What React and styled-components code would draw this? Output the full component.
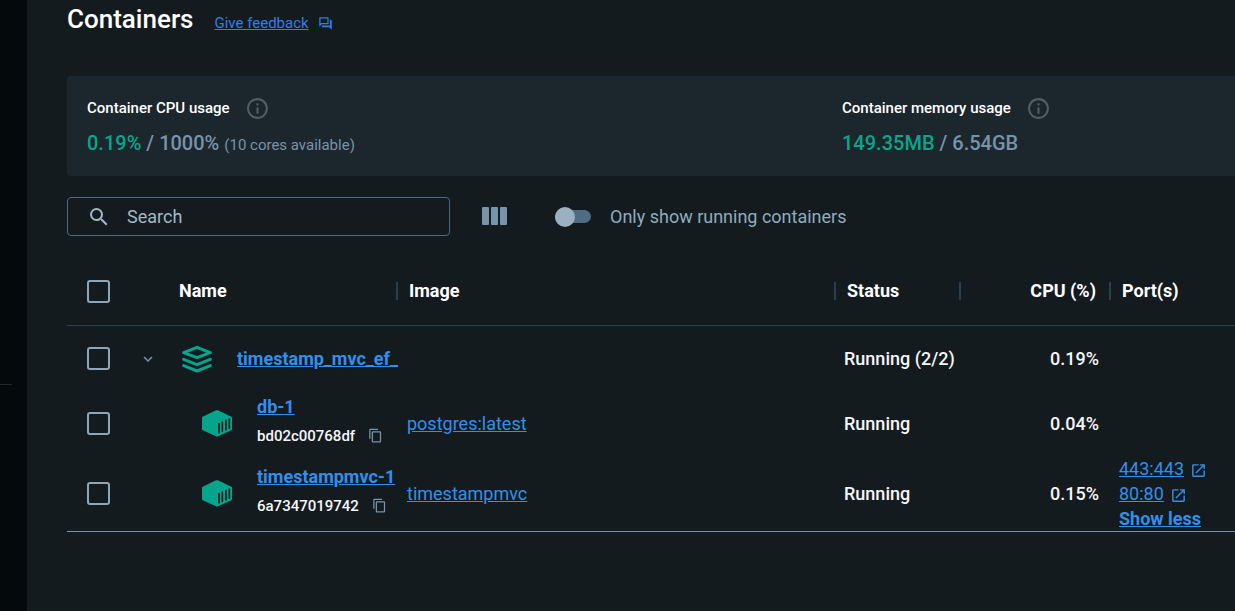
import React from 'react';
import styled, { createGlobalStyle, css } from 'styled-components';
import {
  MdOutlineQuestionAnswer,
  MdInfoOutline,
  MdSearch,
  MdContentCopy,
  MdOpenInNew,
  MdKeyboardArrowDown,
} from 'react-icons/md';

const GlobalStyle = createGlobalStyle`
  *, *::before, *::after { box-sizing: border-box; }
  body {
    margin: 0;
    background: #141b1f;
    color: #f4f6f8;
    font-family: Roboto, "Liberation Sans", sans-serif;
    font-size: 18px;
    line-height: 24px;
  }
  button, input { font: inherit; color: inherit; }
  svg { flex-shrink: 0; }
`;

const Page = styled.div`
  display: grid;
  grid-template-columns: 27px minmax(0, 1fr);
  min-height: 100vh;
`;

const Rail = styled.aside`
  background: #04090c;
  padding-top: 384px;
`;

const RailDivider = styled.hr`
  width: 12px;
  height: 1px;
  margin: 0;
  border: 0;
  background: #23292d;
`;

const Main = styled.main`
  padding-left: 40px;
`;

const Header = styled.header`
  display: flex;
  align-items: center;
  gap: 21px;
  height: 38px;
`;

const Title = styled.h1`
  margin: 0;
  font-size: 26px;
  line-height: 38px;
  font-weight: 500;
  color: #fff;
`;

const Feedback = styled.a`
  display: flex;
  align-items: center;
  gap: 9px;
  padding-top: 8px;
  font-size: 15px;
  color: #2e7feb;
`;

const UsageCard = styled.section`
  display: flex;
  height: 100px;
  margin-top: 38px;
  padding: 20px;
  border-radius: 4px 0 0 4px;
  background: #1c262d;
`;

const Usage = styled.div`
  ${(p) => (p.$last ? css`width: 373px;` : css`flex: 1;`)}
`;

const UsageTitle = styled.h2`
  display: flex;
  align-items: center;
  gap: 15px;
  margin: 0;
  font-size: 15px;
  line-height: 25px;
  font-weight: 500;
  color: #fff;

  svg { color: #545d66; }
`;

const UsageValue = styled.p`
  margin: 10px 0 0;
  font-size: 20px;
  font-weight: 500;
  color: #7794ab;

  strong { font-weight: 500; color: #08a68c; }
  small { font-size: 15px; font-weight: 400; color: #7794ab; }
`;

const Toolbar = styled.div`
  display: flex;
  align-items: flex-start;
  height: 39px;
  margin-top: 21px;
`;

const SearchBox = styled.label`
  display: flex;
  align-items: center;
  gap: 16px;
  width: 383px;
  height: 39px;
  padding: 0 19px;
  border: 1px solid #4d697d;
  border-radius: 4px;
  color: #a3b7c6;
`;

const SearchInput = styled.input`
  flex: 1;
  min-width: 0;
  padding: 0;
  border: 0;
  outline: 0;
  background: none;

  &::placeholder { color: #a3b7c6; opacity: 1; }
`;

const IconButton = styled.button`
  display: inline-flex;
  align-items: center;
  justify-content: center;
  padding: 0;
  border: 0;
  background: none;
  color: #7794ab;
  cursor: pointer;
`;

const ColumnsButton = styled(IconButton)`
  width: 45px;
  height: 38px;
  margin-left: 22px;
`;

const ToggleLabel = styled.label`
  display: flex;
  align-items: center;
  gap: 19px;
  height: 39px;
  margin-left: 38px;
  color: #8fabbf;
`;

const Toggle = styled.input`
  appearance: none;
  display: flex;
  align-items: center;
  width: 36px;
  height: 13px;
  margin: 0;
  background: #4e6c82;
  border-radius: 7px;

  &::before {
    content: '';
    flex-shrink: 0;
    width: 20px;
    height: 20px;
    border-radius: 50%;
    background: #9bb0c0;
  }
  &:checked { justify-content: flex-end; }
`;

const Table = styled.table`
  width: 100%;
  margin-top: 21px;
  border-collapse: separate;
  border-spacing: 0;
  border-bottom: 1px solid #7794ab;
  table-layout: fixed;
`;

const Col = styled.col`
  width: ${(p) => p.$width};
`;

const HeadCell = styled.th`
  height: 69px;
  padding: 0 13px 0 0;
  border-bottom: 1px solid #2f414e;
  font-weight: 700;
  text-align: left;
  color: #fff;
`;

const HeadContent = styled.div`
  display: flex;
  align-items: center;
  justify-content: ${(p) => (p.$end ? 'space-between' : 'flex-start')};
  gap: 11px;
  white-space: nowrap;

  &::before {
    content: '';
    width: 2px;
    height: 18px;
    background: #2b3e4b;
  }
`;

const NameHead = styled(HeadCell)`
  padding-left: 50px;
`;

const CheckHead = styled(HeadCell)`
  padding: 0 0 0 20px;
`;

const Row = styled.tr`
  height: ${(p) => p.$height};
`;

const Cell = styled.td`
  padding: 0 10px;
  text-align: ${(p) => (p.$end ? 'right' : 'left')};
  font-weight: ${(p) => (p.$strong ? 500 : 400)};
  white-space: nowrap;
`;

const CheckCell = styled(Cell)`
  padding: 0 0 0 20px;
`;

const NameCell = styled(Cell)`
  padding: 0;
`;

const ImageCell = styled(Cell)`
  padding-left: 11px;
`;

const Checkbox = styled.input`
  appearance: none;
  display: block;
  width: 23px;
  height: 23px;
  margin: 0;
  border: 2px solid #8fa6b7;
  border-radius: 3px;

  &:checked { background: #8fa6b7; }
`;

const GroupName = styled.div`
  display: flex;
  align-items: center;
`;

const Expander = styled(IconButton)`
  flex-shrink: 0;
  width: 38px;
  height: 24px;
  margin-right: 14px;
`;

const ContainerName = styled.div`
  display: flex;
  align-items: center;
  gap: 25px;
  padding-left: 73px;
`;

const NameStack = styled.div`
  padding-bottom: 5px;
`;

const IdLine = styled.div`
  display: flex;
  align-items: center;
  gap: 13px;
  margin-top: 5px;
  font-size: 15px;
  font-weight: 500;
`;

const Link = styled.a`
  color: #338fec;
  font-weight: ${(p) => (p.$strong ? 700 : 400)};
`;

const GroupLink = styled(Link)`
  margin-left: 24px;
`;

const Ports = styled.div`
  display: flex;
  flex-direction: column;
  align-items: flex-start;
  line-height: 25px;
`;

const PortLink = styled(Link)`
  display: flex;
  align-items: center;
  gap: 6px;

  svg { margin-top: 4px; }
`;

const TextButton = styled.button`
  padding: 0;
  border: 0;
  background: none;
  color: #338fec;
  font-weight: 700;
  line-height: 25px;
  text-decoration: underline;
  cursor: pointer;
`;

const ColumnsIcon = () => (
  <svg width="25" height="18" viewBox="0 0 25 18" fill="currentColor" aria-hidden="true">
    <rect x="0" y="0" width="7" height="18" rx="1" />
    <rect x="9" y="0" width="7" height="18" rx="1" />
    <rect x="18" y="0" width="7" height="18" rx="1" />
  </svg>
);

const StackIcon = () => (
  <svg width="32" height="28" viewBox="0 0 96 84" fill="none" stroke="#04a58b" strokeWidth="9" strokeLinecap="round" strokeLinejoin="round" aria-hidden="true">
    <path d="M48 7 L88 23 L48 38 L8 23 Z" />
    <path d="M8 43 L48 59 L88 43" />
    <path d="M8 62 L48 78 L88 62" />
  </svg>
);

const CubeIcon = () => (
  <svg width="30" height="27" viewBox="0 0 90 81" aria-hidden="true">
    <path fill="#04a58b" d="M42 1 Q45 0 48 1 L88 20 Q90 21 90 23 V58 Q90 60 88 61 L48 79 Q45 81 42 79 L2 61 Q0 60 0 58 V23 Q0 21 2 20 Z" />
    <path stroke="#141b1f" strokeWidth="5" strokeLinecap="round" d="M51 41 V68 M61 36 V64 M72 31 V59 M82 27 V55" />
  </svg>
);

const containers = [
  { name: 'db-1', id: 'bd02c00768df', image: 'postgres:latest', cpu: '0.04%', ports: [], height: '65px' },
  { name: 'timestampmvc-1', id: '6a7347019742', image: 'timestampmvc', cpu: '0.15%', ports: ['443:443', '80:80'], height: '75px' },
];

export default function App() {
  return (
    <>
      <GlobalStyle />
      <Page>
        <Rail>
          <RailDivider />
        </Rail>
        <Main>
          <Header>
            <Title>Containers</Title>
            <Feedback href="#feedback">
              Give feedback
              <MdOutlineQuestionAnswer size={15} />
            </Feedback>
          </Header>

          <UsageCard>
            <Usage>
              <UsageTitle>
                Container CPU usage
                <MdInfoOutline size={25} />
              </UsageTitle>
              <UsageValue>
                <strong>0.19%</strong> / 1000% <small>(10 cores available)</small>
              </UsageValue>
            </Usage>
            <Usage $last>
              <UsageTitle>
                Container memory usage
                <MdInfoOutline size={25} />
              </UsageTitle>
              <UsageValue>
                <strong>149.35MB</strong> / 6.54GB
              </UsageValue>
            </Usage>
          </UsageCard>

          <Toolbar>
            <SearchBox>
              <MdSearch size={24} />
              <SearchInput type="text" placeholder="Search" aria-label="Search" />
            </SearchBox>
            <ColumnsButton type="button" aria-label="Choose columns">
              <ColumnsIcon />
            </ColumnsButton>
            <ToggleLabel>
              <Toggle type="checkbox" role="switch" />
              Only show running containers
            </ToggleLabel>
          </Toolbar>

          <Table>
            <colgroup>
              <Col $width="62px" />
              <Col $width="267px" />
              <Col $width="auto" />
              <Col $width="125px" />
              <Col $width="150px" />
              <Col $width="126px" />
            </colgroup>
            <thead>
              <tr>
                <CheckHead scope="col">
                  <Checkbox type="checkbox" aria-label="Select all" />
                </CheckHead>
                <NameHead scope="col">Name</NameHead>
                <HeadCell scope="col"><HeadContent>Image</HeadContent></HeadCell>
                <HeadCell scope="col"><HeadContent>Status</HeadContent></HeadCell>
                <HeadCell scope="col"><HeadContent $end>CPU (%)</HeadContent></HeadCell>
                <HeadCell scope="col"><HeadContent>Port(s)</HeadContent></HeadCell>
              </tr>
            </thead>
            <tbody>
              <Row $height="65px">
                <CheckCell>
                  <Checkbox type="checkbox" aria-label="Select timestamp_mvc_ef_" />
                </CheckCell>
                <NameCell>
                  <GroupName>
                    <Expander type="button" aria-label="Collapse group">
                      <MdKeyboardArrowDown size={18} />
                    </Expander>
                    <StackIcon />
                    <GroupLink $strong href="#group">timestamp_mvc_ef_</GroupLink>
                  </GroupName>
                </NameCell>
                <Cell />
                <Cell $strong>Running (2/2)</Cell>
                <Cell $strong $end>0.19%</Cell>
                <Cell />
              </Row>
              {containers.map((c) => (
                <Row key={c.name} $height={c.height}>
                  <CheckCell>
                    <Checkbox type="checkbox" aria-label={`Select ${c.name}`} />
                  </CheckCell>
                  <NameCell>
                    <ContainerName>
                      <CubeIcon />
                      <NameStack>
                        <Link $strong href={`#${c.name}`}>{c.name}</Link>
                        <IdLine>
                          {c.id}
                          <IconButton type="button" aria-label="Copy container id">
                            <MdContentCopy size={15} />
                          </IconButton>
                        </IdLine>
                      </NameStack>
                    </ContainerName>
                  </NameCell>
                  <ImageCell>
                    <Link href={`#${c.image}`}>{c.image}</Link>
                  </ImageCell>
                  <Cell $strong>Running</Cell>
                  <Cell $strong $end>{c.cpu}</Cell>
                  <Cell>
                    {c.ports.length > 0 && (
                      <Ports>
                        {c.ports.map((port) => (
                          <PortLink key={port} href={`#${port}`}>
                            {port}
                            <MdOpenInNew size={17} />
                          </PortLink>
                        ))}
                        <TextButton type="button">Show less</TextButton>
                      </Ports>
                    )}
                  </Cell>
                </Row>
              ))}
            </tbody>
          </Table>
        </Main>
      </Page>
    </>
  );
}
